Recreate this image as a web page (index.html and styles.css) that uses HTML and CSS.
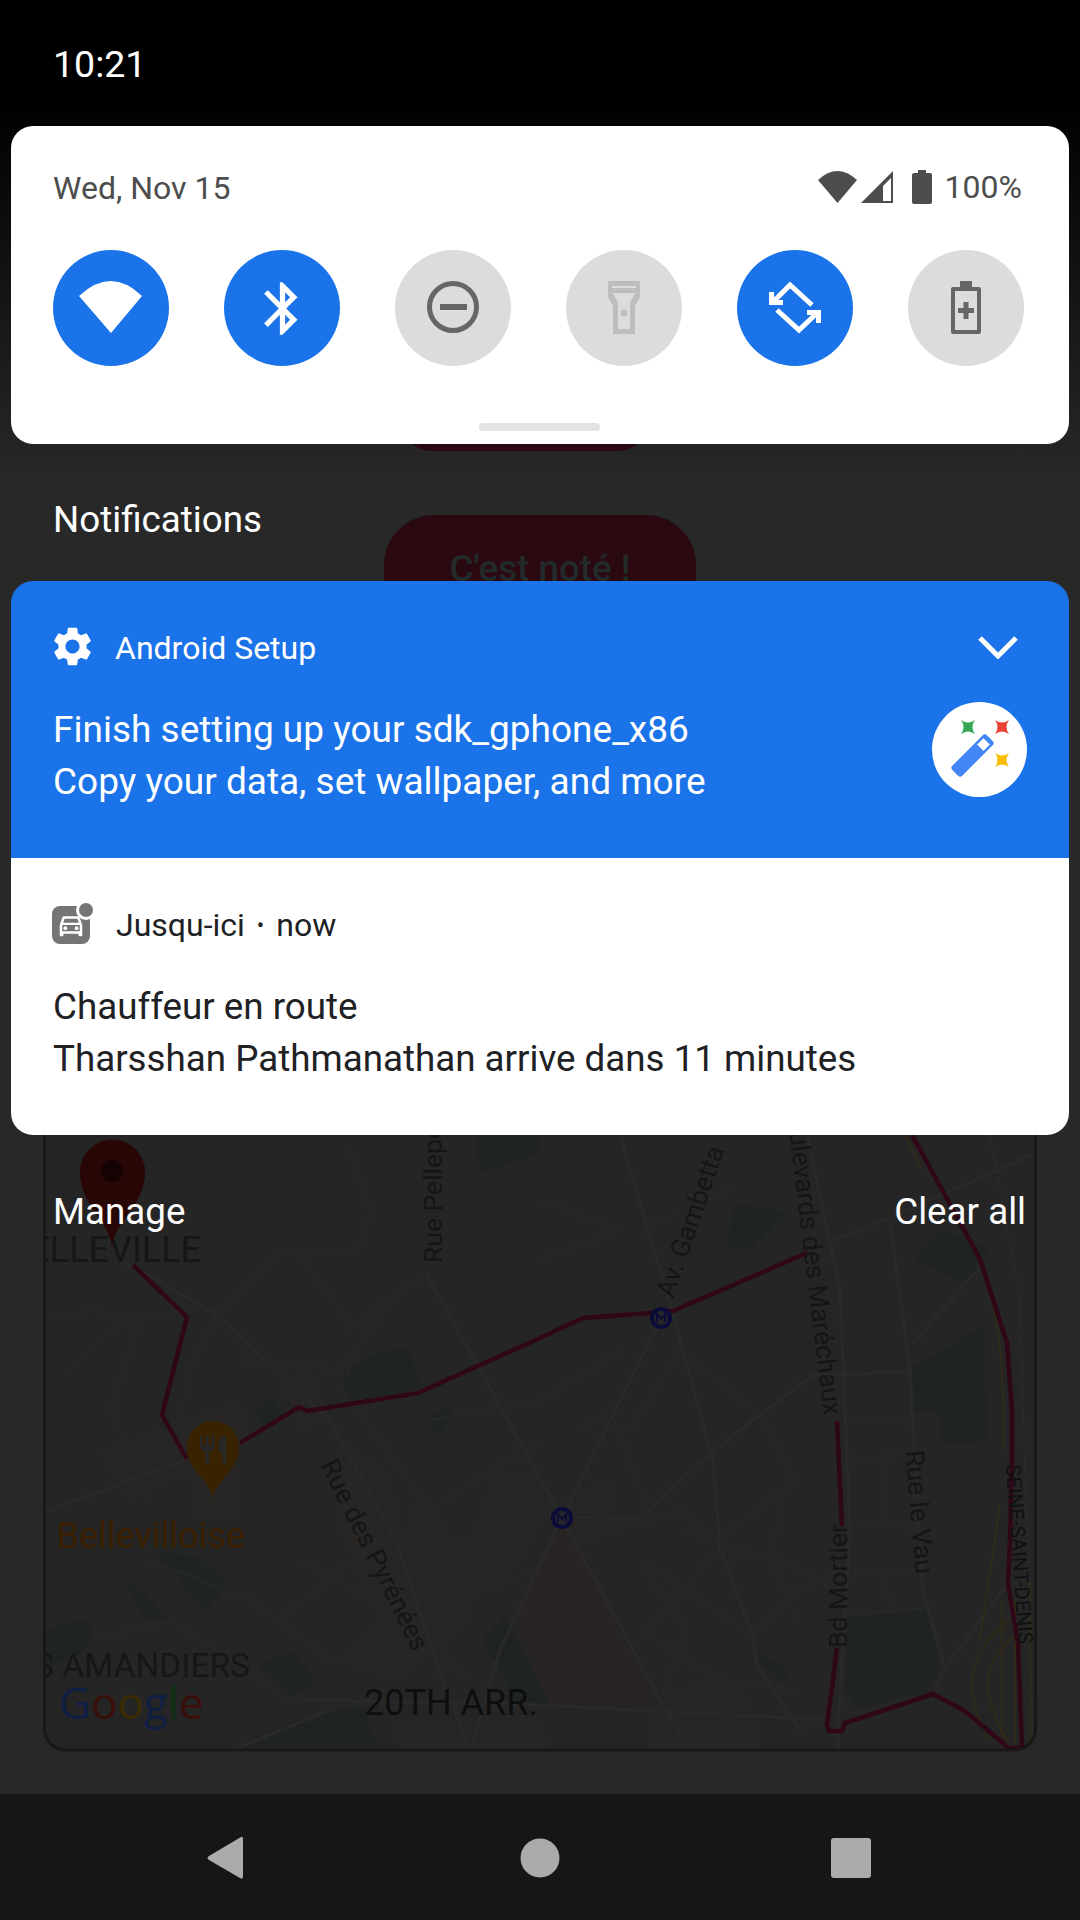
FILE: index.html
```html
<!DOCTYPE html>
<html lang="en">
<head>
<meta charset="utf-8">
<title>Notification shade</title>
<link rel="stylesheet" href="styles.css">
</head>
<body>
<div class="screen">
  <svg class="backdrop" width="1080" height="1920" viewBox="0 0 1080 1920" aria-hidden="true">
    <defs><clipPath id="mapclip"><rect x="43" y="1000" width="994" height="751" rx="22"/></clipPath></defs>
    <rect class="app-btn" x="402" y="380" width="246" height="71" rx="30"/>
    <rect class="app-btn" x="384" y="515" width="312" height="110" rx="50"/>
    <text class="app-btn-text" x="540" y="581" text-anchor="middle">C'est noté !</text>
    <g clip-path="url(#mapclip)">
      <rect class="map-bg" x="43" y="1000" width="994" height="751"/>
      <g class="park">
        <polygon points="338,1379 370,1355 407,1347 423,1387 377,1399 350,1399"/>
        <polygon points="253,1411 273,1399 287,1415 263,1427"/>
        <polygon points="427,1417 447,1405 456,1417 438,1435"/>
        <polygon points="157,1552 197,1556 227,1584 205,1612"/>
        <polygon points="125,1582 143,1592 167,1618 145,1620"/>
        <polygon points="45,1632 80,1618 93,1628 83,1652 45,1668"/>
        <polygon points="257,1664 293,1652 317,1680 293,1696"/>
        <polygon points="482,1640 506,1614 551,1706 520,1706"/>
        <polygon points="230,1749 297,1720 363,1705 377,1749"/>
        <polygon points="477,1135 540,1135 540,1154 480,1172"/>
        <polygon points="733,1204 790,1212 750,1250 728,1245"/>
        <polygon points="915,1259 943,1230 990,1247 970,1285"/>
        <polygon points="913,1367 983,1327 987,1441 942,1443 940,1413 913,1411"/>
        <polygon points="847,1618 927,1610 940,1664 927,1692 857,1709 845,1692"/>
        <polygon points="755,1648 788,1672 788,1686 757,1660"/>
      </g>
      <g class="zone-pink"><polygon points="558,1527 510,1614 551,1706 654,1702 620,1635 572,1527"/></g>
      <g class="zone-yellow">
        <polygon points="100,1450 240,1400 250,1440 130,1500"/>
        <polygon points="190,1470 240,1470 240,1520 195,1520"/>
        <polygon points="280,1380 310,1370 330,1420 300,1430"/>
        <polygon points="340,1440 385,1470 420,1590 380,1620 340,1530"/>
        <polygon points="410,1500 480,1560 470,1620 400,1680 340,1660 400,1600"/>
        <polygon points="500,1470 530,1480 550,1510 520,1560 470,1600 450,1580"/>
        <polygon points="580,1490 610,1480 620,1530 570,1550"/>
        <polygon points="660,1690 740,1680 760,1730 760,1751 650,1751"/>
        <polygon points="390,1720 540,1720 550,1751 400,1751"/>
      </g>
      <g class="road-major">
        <polyline points="117,1258 217,1315 330,1420 395,1540 447,1692 470,1751"/>
        <polyline points="45,1512 187,1459 243,1439 300,1407"/>
        <polyline points="427,1275 480,1370 562,1518 660,1700 690,1751"/>
        <polyline points="661,1318 562,1518 500,1650 470,1751"/>
        <polyline points="562,1518 600,1517 637,1520 713,1451 760,1415 813,1375 843,1375 910,1371"/>
        <polyline points="620,1135 673,1315 713,1459 720,1548 753,1636 757,1664 800,1730"/>
        <polyline points="300,1700 540,1705 827,1720"/>
        <polyline points="807,1135 840,1290 850,1532 838,1725 838,1751"/>
        <polyline points="890,1222 910,1371 923,1592 945,1668"/>
        <polyline points="830,1242 890,1218 1033,1154"/>
        <polyline points="913,1343 980,1267"/>
        <polyline points="945,1668 1007,1584"/>
        <polyline points="845,1723 933,1694 945,1668"/>
        <polyline points="330,1710 230,1751"/>
      </g>
      <g class="road-minor">
        <polyline points="851,1420 915,1417"/><polyline points="851,1459 918,1454"/>
        <polyline points="853,1526 920,1528"/><polyline points="853,1574 923,1568"/>
        <polyline points="853,1615 925,1608"/><polyline points="880,1460 885,1526"/>
        <polyline points="885,1574 890,1610"/>
        <polyline points="45,1320 90,1310 140,1320 190,1310"/>
        <polyline points="65,1375 110,1330 140,1320 110,1410 150,1500"/>
        <polyline points="180,1420 190,1370 217,1315 280,1250 300,1255 350,1250"/>
        <polyline points="350,1250 365,1240 370,1210 350,1150"/>
        <polyline points="300,1255 340,1310 350,1330 400,1290 427,1275"/>
        <polyline points="245,1360 340,1370 400,1290"/>
        <polyline points="350,1370 340,1385 430,1510 540,1440"/>
        <polyline points="430,1510 480,1590 540,1570"/>
        <polyline points="300,1560 390,1610 470,1680"/>
        <polyline points="150,1560 250,1600 330,1660"/>
        <polyline points="90,1640 170,1620 290,1700"/>
        <polyline points="280,1620 340,1570 400,1530"/>
        <polyline points="430,1420 540,1400 590,1370 620,1350"/>
        <polyline points="540,1260 620,1230 540,1200"/>
        <polyline points="640,1230 730,1190"/>
        <polyline points="580,1430 610,1410 645,1500 640,1520"/>
        <polyline points="640,1525 680,1510 720,1540 800,1475"/>
        <polyline points="650,1625 720,1550 780,1560 835,1590"/>
        <polyline points="650,1565 753,1636 800,1590 840,1570"/>
        <polyline points="660,1700 685,1630 640,1560"/>
        <polyline points="680,1530 770,1560 800,1625"/>
        <polyline points="640,1630 720,1680 800,1690"/>
        <polyline points="680,1350 760,1415 790,1470 770,1560"/>
        <polyline points="680,1350 630,1430"/>
      </g>
      <polyline class="rail" points="990,1135 1020,1300 1033,1740"/>
      <g class="highway">
        <path d="M1000 1505 L980 1640 M1010 1620 C970 1650 960 1690 990 1740 M1020 1630 C985 1660 975 1690 1010 1745 M1002 1600 L1002 1751 M1015 1600 L1015 1751 M1030 1580 L1030 1751"/>
        <path d="M905 1135 L922 1170 M988 1290 C1005 1340 1003 1400 1003 1450"/>
      </g>
      <polyline class="route" points="133,1265 187,1317 162,1415 187,1459"/>
      <polyline class="route" points="240,1443 299,1407 307,1411 418,1393 540,1338 583,1318 650,1313 673,1311 807,1253"/>
      <polyline class="route" points="837,1421 842,1526"/>
      <polyline class="route" points="837,1648 827,1725 829,1731 842,1731 845,1723 933,1694 965,1711 1010,1749 1022,1747 1018,1644 1008,1584 1010,1540 1012,1463 1012,1411 1007,1343 980,1259 912,1135"/>
      <text class="map-label lg" x="201" y="1262" text-anchor="end">ELLEVILLE</text>
      <text class="map-label lg2" x="250" y="1677" text-anchor="end">LES AMANDIERS</text>
      <text class="map-label dark" x="364" y="1715">20TH ARR.</text>
      <text class="map-label poi" x="245" y="1548" text-anchor="end">La Bellevilloise</text>
      <text class="map-label" transform="translate(442 1263) rotate(-90)">Rue Pelleport</text>
      <text class="map-label" transform="translate(673 1299) rotate(-71)">Av. Gambetta</text>
      <text class="map-label" text-anchor="end" transform="translate(824 1416) rotate(83)">Boulevards des Maréchaux</text>
      <text class="map-label" transform="translate(847 1648) rotate(-90)">Bd Mortier</text>
      <text class="map-label" transform="translate(905 1451) rotate(85)">Rue le Vau</text>
      <text class="map-label" transform="translate(320 1465) rotate(63.500)">Rue des Pyrénées</text>
      <text class="map-label sm" transform="translate(1006 1465) rotate(86)">SEINE-SAINT-DENIS</text>
      <text class="google" x="59" y="1719"><tspan class="g-b">G</tspan><tspan class="g-r">o</tspan><tspan class="g-y">o</tspan><tspan class="g-b">g</tspan><tspan class="g-g">l</tspan><tspan class="g-r">e</tspan></text>
      <g class="metro" transform="translate(661 1318)"><circle r="9"/><path d="M-4 4V-4L0 1 4-4V4"/></g>
      <g class="metro" transform="translate(562 1518)"><circle r="9"/><path d="M-4 4V-4L0 1 4-4V4"/></g>
      <path class="pin" d="M112 1246C108 1220 80 1205 80 1172a32.5 32.5 0 0 1 65 0C145 1205 116 1220 112 1246Z"/>
      <circle class="pin-dot" cx="112" cy="1171" r="11"/>
      <path class="food-pin" d="M213 1498C210 1480 187 1470 187 1447a26 26 0 0 1 52 0C239 1470 216 1480 213 1498Z"/>
      <path class="food-mark" transform="translate(195.600 1432.600) scale(1.450)" d="M11 9H9V2H7v7H5V2H3v7c0 2.120 1.660 3.840 3.750 3.970V22h2.500v-9.030C11.340 12.840 13 11.120 13 9V2h-2v7zm5-3v8h2.500v8H21V2c-2.760 0-5 2.240-5 4z"/>
    </g>
    <rect class="map-frame" x="44.500" y="1000" width="991" height="750" rx="21"/>
  </svg>

  <header class="status-bar"><span class="clock">10:21</span></header>

  <section class="qs">
    <div class="qs-head">
      <span class="date">Wed, Nov 15</span>
      <div class="sys">
        <svg class="sys-wifi" width="39" height="32" viewBox="0 0 39 32"><path d="M0 9Q19.500-9 39 9L19.500 32Z"/></svg>
        <svg class="sys-signal" width="32" height="32" viewBox="0 0 32 32"><path fill-rule="evenodd" d="M32 0V32H0ZM30 7 22 15V30H30Z"/></svg>
        <svg class="sys-batt" width="20" height="34" viewBox="0 0 20 34"><path d="M6 0H14V3H18Q20 3 20 5V32Q20 34 18 34H2Q0 34 0 32V5Q0 3 2 3H6Z"/></svg>
        <span class="pct">100%</span>
      </div>
    </div>
    <div class="tiles">
      <div class="tile on"><svg width="116" height="116" viewBox="0 0 116 116"><path class="fill-w" d="M26 46Q58 16 89 46L58 83Z"/></svg></div>
      <div class="tile on"><svg width="63" height="63" viewBox="0 0 24 24"><path class="fill-w" d="M17.710 7.710 12 2h-1v7.590L6.410 5 5 6.410 10.590 12 5 17.590 6.410 19 11 14.410V22h1l5.710-5.710-4.300-4.290 4.300-4.290zM13 5.830l1.880 1.880L13 9.590V5.830zm1.880 10.460L13 18.170v-3.760l1.880 1.880z"/></svg></div>
      <div class="tile off"><svg width="116" height="116" viewBox="0 0 116 116"><circle class="ln-g" cx="58" cy="57" r="23.500" stroke-width="5"/><rect class="fill-g" x="45" y="54" width="27" height="6"/></svg></div>
      <div class="tile off"><svg width="116" height="116" viewBox="0 0 116 116"><path class="fill-d" fill-rule="evenodd" d="M42 31H74V47L69 56V84H47V56L42 47ZM46 36V38H70V36ZM47 43 52 53V79H64V53L69 43Z"/><circle class="fill-d" cx="58" cy="63" r="3.500"/></svg></div>
      <div class="tile on"><svg width="116" height="116" viewBox="0 0 116 116"><path class="ln-w" stroke-width="5" d="M37 51 53 35 75 55M79 64 62 80 40 60"/><path class="fill-w" d="M32 42H37V50H46V55H32ZM84 73H79V65H70V60H84Z"/></svg></div>
      <div class="tile off"><svg width="116" height="116" viewBox="0 0 116 116"><path class="fill-g" fill-rule="evenodd" d="M52 31H64V37H71Q73 37 73 39V82Q73 84 71 84H45Q43 84 43 82V39Q43 37 45 37H52ZM47 41V80H69V41Z"/><path class="fill-g" d="M55.500 52H60.500V58H66V63H60.500V69H55.500V63H50V58H55.500Z"/></svg></div>
    </div>
    <div class="handle"></div>
  </section>

  <h2 class="notif-title">Notifications</h2>

  <section class="stack">
    <article class="card blue">
      <div class="card-head">
        <svg class="gear" width="47" height="47" viewBox="0 0 24 24"><path class="fill-w" d="M19.140 12.940c.04-.3.06-.61.06-.94 0-.32-.02-.64-.07-.94l2.030-1.580c.18-.14.23-.41.12-.61l-1.920-3.320c-.12-.22-.37-.29-.59-.22l-2.390.96c-.5-.38-1.030-.7-1.620-.94l-.36-2.540c-.04-.24-.24-.41-.48-.41h-3.840c-.24 0-.43.17-.47.41l-.36 2.540c-.59.24-1.130.57-1.620.94l-2.390-.96c-.22-.08-.47 0-.59.22L2.740 8.870c-.12.21-.08.47.12.61l2.030 1.580c-.05.3-.09.63-.09.94s.02.64.07.94l-2.030 1.580c-.18.14-.23.41-.12.61l1.920 3.320c.12.22.37.29.59.22l2.390-.96c.5.38 1.030.7 1.620.94l.36 2.540c.05.24.24.41.48.41h3.840c.24 0 .44-.17.47-.41l.36-2.540c.59-.24 1.130-.56 1.620-.94l2.390.96c.22.08.47 0 .59-.22l1.920-3.320c.12-.22.07-.47-.12-.61l-2.010-1.580zM12 15.600c-1.980 0-3.600-1.620-3.600-3.600s1.620-3.600 3.600-3.600 3.600 1.620 3.600 3.600-1.620 3.600-3.600 3.600z"/></svg>
        <span class="app-name">Android Setup</span>
        <svg class="chev" width="42" height="24" viewBox="0 0 42 24"><path class="ln-w" stroke-width="5" d="M3 3 21 21 39 3"/></svg>
      </div>
      <div class="card-body with-icon">
        <div class="card-text">
          <p>Finish setting up your sdk_gphone_x86</p>
          <p>Copy your data, set wallpaper, and more</p>
        </div>
        <svg class="wand" width="95" height="95" viewBox="0 0 95 95">
          <circle class="fill-w" cx="47.500" cy="47.500" r="47.500"/>
          <g transform="translate(40.500 53.500) rotate(-45)">
            <rect class="wand-body" x="-24.500" y="-7" width="49" height="14" rx="3"/>
            <rect class="fill-w" x="11" y="-4.500" width="9" height="9"/>
          </g>
          <path class="st-g" d="M29 18Q36 23 43 18 38 25 43 32 36 27 29 32 34 25 29 18Z"/>
          <path class="st-r" d="M63 18Q70 23 77 18 72 25 77 32 70 27 63 32 68 25 63 18Z"/>
          <path class="st-y" d="M63 51Q70 56 77 51 72 58 77 65 70 60 63 65 68 58 63 51Z"/>
        </svg>
      </div>
    </article>
    <article class="card white">
      <div class="card-head">
        <span class="car-badge">
          <svg width="30" height="30" viewBox="0 0 24 24"><path class="fill-w" d="M18.920 6.010C18.720 5.420 18.160 5 17.500 5h-11c-.66 0-1.210.42-1.420 1.010L3 12v8c0 .55.45 1 1 1h1c.55 0 1-.45 1-1v-1h12v1c0 .55.45 1 1 1h1c.55 0 1-.45 1-1v-8l-2.080-5.990zM6.850 7h10.290l1.080 3.110H5.770L6.850 7zM19 17H5v-5h14v5z"/><circle class="fill-w" cx="7.500" cy="14.500" r="1.500"/><circle class="fill-w" cx="16.500" cy="14.500" r="1.500"/></svg>
          <span class="car-dot"></span>
        </span>
        <span class="app-name">Jusqu-ici</span>
        <span class="sep">•</span>
        <span class="app-name">now</span>
      </div>
      <div class="card-body">
        <div class="card-text">
          <p>Chauffeur en route</p>
          <p>Tharsshan Pathmanathan arrive dans 11 minutes</p>
        </div>
      </div>
    </article>
  </section>

  <div class="actions"><span>Manage</span><span>Clear all</span></div>

  <nav class="navbar">
    <span class="nav-cell"><svg width="48" height="48" viewBox="0 0 48 48"><path class="nav-ic" d="M40 3Q42 2 42 5V42Q42 46 39 44L8 26Q5 24 8 22Z"/></svg></span>
    <span class="nav-cell"><svg width="48" height="48" viewBox="0 0 48 48"><circle class="nav-ic" cx="24" cy="24" r="19.500"/></svg></span>
    <span class="nav-cell"><svg width="48" height="48" viewBox="0 0 48 48"><rect class="nav-ic" x="0" y="4" width="40" height="40" rx="3"/></svg></span>
  </nav>
</div>
</body>
</html>
```

FILE: styles.css
```css
* { box-sizing: border-box; }
html, body { margin: 0; padding: 0; }
body { width: 1080px; height: 1920px; overflow: hidden; font-family: Roboto, "Liberation Sans", sans-serif; }
p, h2 { margin: 0; font-weight: 400; }
svg { display: block; flex: none; }

.screen {
  position: relative;
  width: 1080px;
  height: 1920px;
  display: flex;
  flex-direction: column;
  overflow: hidden;
  background: linear-gradient(#000 100px, #282828 480px);
}
.backdrop { position: absolute; left: 0; top: 0; }

/* background app, dimmed */
.app-btn { fill: #2a0910; }
.app-btn-text { font: 500 36.750px Roboto, sans-serif; fill: #232a2a; }
.map-bg { fill: #252525; }
.park polygon { fill: #1f2421; }
.zone-pink polygon { fill: #282423; }
.zone-yellow polygon { fill: #272624; }
.road-major polyline { fill: none; stroke: #292929; stroke-width: 3.500; }
.road-minor polyline { fill: none; stroke: #282828; stroke-width: 1.800; }
.rail { fill: none; stroke: #2e2e2e; stroke-width: 1.500; stroke-dasharray: 3 3; }
.highway path { fill: none; stroke: #332c14; stroke-width: 1.500; }
.route { fill: none; stroke: #2f0717; stroke-width: 4.500; stroke-linejoin: round; }
.map-frame { fill: none; stroke: #181818; stroke-width: 3; }
.map-label { font: 400 26.500px Roboto, sans-serif; fill: #151515; }
.map-label.lg { font-size: 36px; fill: #161616; }
.map-label.lg2 { font-size: 33.500px; fill: #161616; }
.map-label.dark { font-size: 36px; fill: #0e0e0e; }
.map-label.poi { font-size: 36px; fill: #3a2000; }
.map-label.sm { font-size: 20.500px; fill: #101010; }
.google { font: 500 44px "Open Sans", Roboto, sans-serif; }
.g-b { fill: #0f1f44; }
.g-r { fill: #3a0f0a; }
.g-y { fill: #3a2c00; }
.g-g { fill: #103016; }
.metro circle { fill: #26262a; stroke: #0b0b3a; stroke-width: 4; }
.metro path { fill: none; stroke: #0b0b3a; stroke-width: 2; }
.pin { fill: #280606; }
.pin-dot { fill: #150202; }
.food-pin { fill: #392200; }
.food-mark { fill: #282828; }

/* status bar */
.status-bar { position: relative; height: 126px; padding: 44px 53px 0; color: #fff; font-size: 37.500px; line-height: 40px; flex: none; }

/* quick settings */
.qs {
  position: relative;
  flex: none;
  height: 318px;
  margin: 0 11px;
  padding: 43px 47px 0 42px;
  background: #fff;
  border-radius: 22px;
  display: flex;
  flex-direction: column;
}
.qs-head { display: flex; justify-content: space-between; align-items: center; height: 36px; color: #4d4d4d; font-size: 32px; }
.date { position: relative; top: 1px; }
.sys { display: flex; align-items: center; }
.sys-wifi path, .sys-signal path, .sys-batt path { fill: #4d4d4d; }
.sys-signal { margin-left: 4px; }
.sys-batt { margin-left: 19px; }
.pct { margin-left: 13px; }
.tiles { display: flex; gap: 55px; margin-top: 45px; margin-right: -4px; }
.tile { width: 116px; height: 116px; border-radius: 50%; display: flex; align-items: center; justify-content: center; flex: none; }
.tile.on { background: #1a73e8; }
.tile.off { background: #dcdcdc; }
.fill-w { fill: #fff; }
.fill-g { fill: #666; }
.fill-d { fill: #bdbdbd; }
.ln-w { fill: none; stroke: #fff; }
.ln-g { fill: none; stroke: #666; }
.handle { width: 121px; height: 8px; border-radius: 4px; background: #e3e3e3; margin: 57px auto 0; transform: translateX(2px); }

/* notifications */
.notif-title { position: relative; flex: none; height: 137px; padding: 56px 42px 0; margin: 0 11px; color: #fff; font-size: 36.750px; line-height: 40px; }
.stack { position: relative; flex: none; height: 554px; margin: 0 11px; border-radius: 22px; overflow: hidden; display: flex; flex-direction: column; }
.card { padding: 0 42px; flex: none; }
.card.blue { height: 277px; background: #1a73e8; color: #fff; }
.card.white { height: 277px; background: #fff; color: #202124; }
.card-head { display: flex; align-items: center; height: 48px; margin-top: 43px; font-size: 32px; }
.gear { margin: -3px 19px 0 -4px; }
.app-name { line-height: 36px; }
.chev { margin-left: auto; margin-right: 8px; margin-top: -2px; }
.sep { margin: 0 12px; font-size: 22px; }
.card-body { margin-top: 32px; font-size: 36.750px; line-height: 52px; }
.card-body.with-icon { display: flex; justify-content: space-between; align-items: flex-start; font-size: 37px; }
.car-badge { position: relative; width: 38px; height: 38px; border-radius: 8px; background: #757575; display: flex; align-items: center; justify-content: center; margin-right: 26px; margin-left: -1px; flex: none; }
.car-dot { position: absolute; right: -6px; top: -6px; width: 20px; height: 20px; border-radius: 50%; background: #757575; border: 3px solid #fff; }
.wand { margin-top: -2px; }
.wand-body { fill: #4285f4; }
.st-g { fill: #34a853; }
.st-r { fill: #ea4335; }
.st-y { fill: #fbbc04; }

.actions { position: relative; flex: none; display: flex; justify-content: space-between; height: 659px; padding: 57px 54px 0 53px; color: #fff; font-size: 36.750px; line-height: 40px; }

/* nav bar */
.navbar { position: relative; flex: none; height: 126px; background: #161616; display: flex; justify-content: center; align-items: center; padding-top: 2px; }
.nav-cell { width: 315px; display: flex; justify-content: center; }
.nav-ic { fill: #ababab; }
```
